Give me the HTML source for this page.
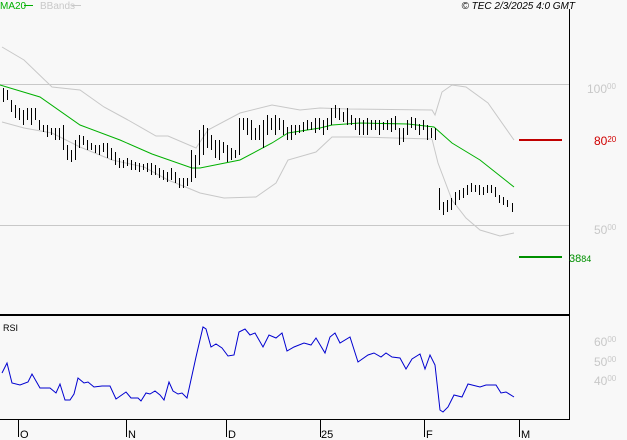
<!DOCTYPE html>
<html><head><meta charset="utf-8"><style>
html,body{margin:0;padding:0;background:#f8f8f8;}
svg{display:block;font-family:"Liberation Sans",sans-serif;}
</style></head><body>
<svg width="627" height="440" viewBox="0 0 627 440" xmlns="http://www.w3.org/2000/svg">
<rect width="627" height="440" fill="#f8f8f8"/>
<text x="0" y="9" font-size="10" fill="#00b000">MA20</text>
<line x1="24" y1="5.5" x2="33" y2="5.5" stroke="#00b000" stroke-width="1"/>
<text x="40" y="9" font-size="10" fill="#c8c8c8">BBands</text>
<line x1="72" y1="5.5" x2="81" y2="5.5" stroke="#c8c8c8"/>
<text x="575" y="9" font-size="10" font-style="italic" text-anchor="end" fill="#000">© TEC 2/3/2025 4:0 GMT</text>
<line x1="0" y1="84.5" x2="569" y2="84.5" stroke="#c8c8c8"/>
<line x1="0" y1="225.5" x2="569" y2="225.5" stroke="#c8c8c8"/>
<line x1="569.5" y1="9" x2="569.5" y2="420" stroke="#000"/>
<line x1="0" y1="315" x2="569" y2="315" stroke="#000" stroke-width="2"/>
<line x1="0" y1="419.5" x2="569" y2="419.5" stroke="#000"/>
<text x="587" y="93" font-size="12" fill="#c8c8c8">100<tspan font-size="8" dy="-4">00</tspan></text>
<text x="594" y="145" font-size="12" fill="#d00000">80<tspan font-size="8" dy="-3">20</tspan></text>
<text x="594" y="234" font-size="12" fill="#c8c8c8">50<tspan font-size="8" dy="-4">00</tspan></text>
<text x="569" y="262" font-size="11" fill="#009000">38<tspan font-size="9">84</tspan></text>
<text x="594" y="346" font-size="12" fill="#c8c8c8">60<tspan font-size="8" dy="-4">00</tspan></text>
<text x="594" y="366" font-size="12" fill="#c8c8c8">50<tspan font-size="8" dy="-4">00</tspan></text>
<text x="594" y="385" font-size="12" fill="#c8c8c8">40<tspan font-size="8" dy="-4">00</tspan></text>
<line x1="519" y1="140" x2="562" y2="140" stroke="#c00000" stroke-width="2"/>
<line x1="519" y1="257" x2="562" y2="257" stroke="#009000" stroke-width="2"/>
<polyline fill="none" stroke="#c8c8c8" points="2,47 24,60 52,87 80,90 104,107 128,120 156,136 168,136 196,148 208,130 240,113 272,105 300,110 320,108 348,109 432,110 435,115 442,92 452,85 466,87 488,103 514,140"/>
<polyline fill="none" stroke="#c8c8c8" points="2,122 24,128 52,133 80,147 112,160 144,167 168,180 188,188 200,193 224,198 256,197 276,183 288,160 316,152 332,137 360,137 432,139 438,163 452,200 466,218 480,230 500,236 514,233"/>
<polyline fill="none" stroke="#00b000" points="0,85 40,97 80,125 120,140 152,154 192,168 200,168 240,160 272,143 288,133 320,128 332,125 360,123 408,124 434,127 452,143 480,160 514,187"/>
<path fill="none" stroke="#000" stroke-width="1" d="
M3.5 88V102M7.5 90V100M11.5 100V112M15.5 105V118M19.5 108V120M23.5 110V125M27.5 108V120M31.5 108V125M35.5 108V120M39.5 120V130M43.5 125V132M47.5 125V137M51.5 128V135M55.5 128V140M59.5 128V140M63.5 125V150M67.5 145V160M71.5 150V162M75.5 140V160M79.5 135V148M83.5 136V145M87.5 140V150M91.5 143V150M95.5 145V153M99.5 145V155M103.5 143V152M107.5 143V158M111.5 148V160M115.5 152V165M119.5 158V168M123.5 160V168M127.5 158V166M131.5 160V170M135.5 162V170M139.5 163V172M143.5 164V170M147.5 163V172M151.5 163V175M155.5 165V175M159.5 168V178M163.5 170V180M167.5 172V182M171.5 168V180M175.5 172V183M179.5 178V188M183.5 178V188M187.5 178V186M191.5 150V182M195.5 155V178M199.5 130V165M203.5 125V155M207.5 128V148M211.5 135V150M215.5 140V158M219.5 140V160M223.5 142V153M227.5 145V162M231.5 148V160M235.5 150V158M239.5 118V155M243.5 118V130M247.5 118V135M251.5 120V140M255.5 128V140M259.5 125V140M263.5 120V148M267.5 115V135M271.5 118V130M275.5 115V135M279.5 118V130M283.5 120V135M287.5 127V140M291.5 125V140M295.5 125V135M299.5 125V133M303.5 122V132M307.5 120V130M311.5 122V130M315.5 118V133M319.5 118V130M323.5 120V135M327.5 118V130M331.5 108V125M335.5 105V118M339.5 108V120M343.5 112V122M347.5 108V125M351.5 115V125M355.5 118V130M359.5 118V135M363.5 120V135M367.5 118V135M371.5 120V130M375.5 120V130M379.5 120V135M383.5 122V130M387.5 120V130M391.5 118V132M395.5 116V130M399.5 128V145M403.5 128V142M407.5 120V135M411.5 117V128M415.5 118V130M419.5 124V135M423.5 120V130M427.5 125V140M431.5 128V138M435.5 128V140M439.5 188V210M443.5 202V215M447.5 200V212M451.5 198V210M455.5 192V205M459.5 190V200M463.5 188V198M467.5 185V195M471.5 183V192M475.5 185V192M479.5 185V195M483.5 187V195M487.5 185V193M491.5 185V193M495.5 187V197M499.5 195V203M503.5 197V205M507.5 200V207M512.5 203V212"/>
<text x="3" y="331" font-size="9" fill="#000">RSI</text>
<polyline fill="none" stroke="#0000d0" points="2,373 7,363 12,383 20,385 28,382 32,374 40,388 50,388 56,393 60,384 65,400 70,400 74,394 78,378 84,383 88,382 94,387 102,386 110,386 116,399 126,392 131,398 138,398 141,401 146,393 150,394 155,391 160,395 164,400 169,382 173,391 178,394 182,393 187,398 196,357 203,327 206,329 211,347 216,344 222,348 228,356 234,355 239,332 245,329 250,335 255,333 263,347 269,335 276,338 282,333 287,351 294,347 304,343 311,345 316,338 325,353 330,337 335,333 340,343 350,337 358,362 368,355 374,353 381,357 386,353 392,357 400,358 406,369 412,359 420,354 425,369 430,355 435,365 440,410 443,412 448,407 454,395 462,397 468,384 480,387 486,385 496,385 501,393 506,392 514,397"/>
<path stroke="#000" d="M18.5 420V437M126.5 420V437M226.5 420V437M320.5 420V437M424.5 420V437M519.5 420V437"/>
<text x="20" y="438" font-size="11" fill="#000">O</text>
<text x="128" y="438" font-size="11" fill="#000">N</text>
<text x="228" y="438" font-size="11" fill="#000">D</text>
<text x="321" y="438" font-size="11" fill="#000">25</text>
<text x="426" y="438" font-size="11" fill="#000">F</text>
<text x="521" y="438" font-size="11" fill="#000">M</text>
</svg>
</body></html>
